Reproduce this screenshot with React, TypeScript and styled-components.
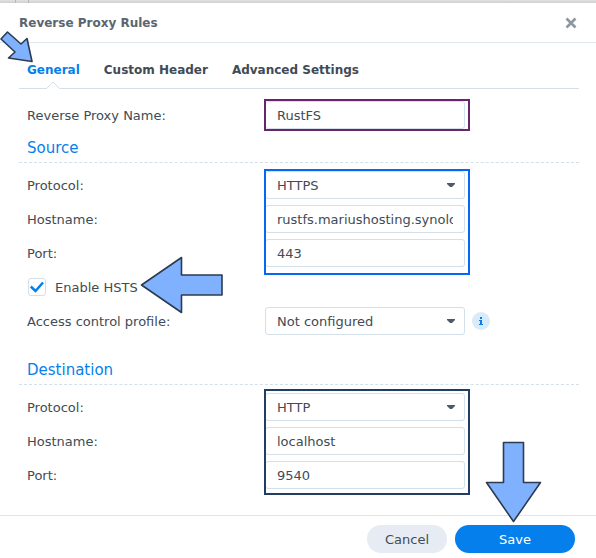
import React, { useState } from "react";
import styled, { createGlobalStyle, css } from "styled-components";

const line = "#d3dfe9";
const ink = "#414b55";
const blue = "#057feb";

const GlobalStyle = createGlobalStyle`
  *, *::before, *::after { box-sizing: border-box; }
  body {
    margin: 0;
    background: #fff;
    color: ${ink};
    font: 13px/20px "DejaVu Sans", Verdana, sans-serif;
  }
  button, input, select { font: inherit; color: inherit; }
`;

const Page = styled.div`
  display: flex;
  flex-direction: column;
  min-height: 100vh;
`;

const Backdrop = styled.div`
  display: flex;
  height: 3px;
  padding-left: 15px;
  background: linear-gradient(#e2e2e2, #cfcfcf);
`;

const BackdropColumn = styled.div`
  width: 14px;
  border: solid #b4b8bc;
  border-width: 0 1px;
`;

const Dialog = styled.section`
  display: flex;
  flex: 1;
  flex-direction: column;
`;

const Header = styled.header`
  display: flex;
  align-items: center;
  justify-content: space-between;
  height: 40px;
  padding: 0 18px 0 19px;
  border-bottom: 1px solid #dfe8ee;
`;

const Title = styled.h1`
  margin: 0;
  color: #5b656f;
  font-size: 12px;
  line-height: 20px;
`;

const CloseButton = styled.button`
  display: flex;
  padding: 0;
  border: 0;
  background: none;
  color: #8f979e;
  cursor: pointer;
`;

const Content = styled.div`
  flex: 1;
  padding: 16px 17px 26px 19px;
`;

const Tabs = styled.nav`
  display: flex;
  gap: 24px;
  height: 30px;
  padding-left: 8px;
  border-bottom: 1px solid ${line};
`;

const TabButton = styled.button<{ $active: boolean }>`
  position: relative;
  height: 30px;
  padding: 0 0 9px;
  border: 0;
  background: none;
  color: ${(p) => (p.$active ? blue : ink)};
  font-size: 12px;
  font-weight: bold;
  cursor: pointer;
`;

const Notch = styled.svg`
  position: absolute;
  bottom: 0;
  left: calc(50% - 8px);
`;

const Form = styled.form`
  padding-top: 12px;
`;

const FramedRows = styled.div<{ $color: string; $top: number; $bottom: number }>`
  position: relative;
  display: grid;
  gap: 6px;
  &::after {
    content: "";
    position: absolute;
    top: -${(p) => p.$top}px;
    bottom: -${(p) => p.$bottom}px;
    left: 245px;
    width: 206px;
    border: 2px solid ${(p) => p.$color};
    pointer-events: none;
  }
`;

const Section = styled.section<{ $gap: number }>`
  display: grid;
  gap: 6px;
  margin-top: ${(p) => p.$gap}px;
`;

const SectionTitle = styled.h2`
  height: 28px;
  margin: 0 0 2px;
  padding: 2px 8px 0;
  border-bottom: 1px dashed ${line};
  color: ${blue};
  font-size: 15px;
  font-weight: normal;
  line-height: 22px;
`;

const Row = styled.div`
  display: grid;
  grid-template-columns: 238px 200px auto;
  align-items: center;
  height: 28px;
  padding-left: 8px;
`;

const FieldLabel = styled.label`
  padding-top: 2px;
`;

const control = css`
  width: 100%;
  height: 28px;
  padding: 0 11px;
  border: 1px solid ${line};
  border-radius: 3px;
  background: #fff;
  outline: none;
`;

const TextInput = styled.input`
  ${control}
`;

const SelectBox = styled.div`
  display: grid;
  align-items: center;
  > * {
    grid-area: 1 / 1;
  }
  > svg {
    justify-self: end;
    margin-right: 10px;
    pointer-events: none;
  }
`;

const SelectInput = styled.select`
  ${control}
  appearance: none;
  padding-top: 2px;
`;

const InfoButton = styled.button`
  display: flex;
  width: 18px;
  height: 18px;
  margin-left: 7px;
  padding: 0;
  border: 0;
  border-radius: 50%;
  background: #d9eafa;
`;

const CheckRow = styled.div`
  display: flex;
  align-items: center;
  height: 28px;
  padding-left: 9px;
`;

const CheckLabel = styled.label`
  position: relative;
  display: flex;
  align-items: center;
  gap: 9px;
`;

const CheckText = styled.span`
  padding-top: 2px;
`;

const CheckSlot = styled.span`
  display: grid;
  > * {
    grid-area: 1 / 1;
  }
  > svg {
    pointer-events: none;
  }
`;

const Checkbox = styled.input`
  appearance: none;
  width: 18px;
  height: 18px;
  margin: 0;
  border: 1px solid ${line};
  border-radius: 3px;
  background: #fff;
`;

const Footer = styled.footer`
  display: flex;
  justify-content: flex-end;
  gap: 8px;
  padding: 9px 21px 5px;
  border-top: 1px solid #dfe5ec;
`;

const ActionButton = styled.button<{ $primary?: boolean }>`
  position: relative;
  width: ${(p) => (p.$primary ? 120 : 80)}px;
  height: 28px;
  padding: 2px 0 0;
  border: 0;
  border-radius: 14px;
  background: ${(p) => (p.$primary ? blue : "#e7ecf4")};
  color: ${(p) => (p.$primary ? "#fff" : ink)};
  cursor: pointer;
`;

const pointerStyle = css`
  position: absolute;
  z-index: 1;
  overflow: visible;
  pointer-events: none;
  fill: #80b1ff;
  stroke: #2c3b50;
  stroke-width: 1.6;
  stroke-linejoin: round;
`;

const TabPointer = styled.svg`
  ${pointerStyle}
  top: -28px;
  left: -27px;
`;

const CheckPointer = styled.svg`
  ${pointerStyle}
  top: -19px;
  left: 113px;
`;

const SavePointer = styled.svg`
  ${pointerStyle}
  bottom: 31px;
  left: 31px;
`;

type FieldProps = { id: string; label: string; initial: string };

function TextField({ id, label, initial }: FieldProps) {
  const [value, setValue] = useState(initial);
  return (
    <Row>
      <FieldLabel htmlFor={id}>{label}</FieldLabel>
      <TextInput id={id} value={value} spellCheck={false} onChange={(e) => setValue(e.target.value)} />
    </Row>
  );
}

function SelectField({ id, label, initial, options, children }: FieldProps & { options: string[]; children?: React.ReactNode }) {
  return (
    <Row>
      <FieldLabel htmlFor={id}>{label}</FieldLabel>
      <SelectBox>
        <SelectInput id={id} defaultValue={initial}>
          {options.map((o) => (
            <option key={o}>{o}</option>
          ))}
        </SelectInput>
        <svg width="8" height="4" viewBox="0 0 8 4" aria-hidden="true">
          <path d="M0 0h8v1L5 4H3L0 1z" fill="#505a64" />
        </svg>
      </SelectBox>
      {children}
    </Row>
  );
}

const tabs = ["General", "Custom Header", "Advanced Settings"];
const protocols = ["HTTP", "HTTPS"];

export default function App() {
  const [active, setActive] = useState("General");
  const [hsts, setHsts] = useState(true);
  return (
    <>
      <GlobalStyle />
      <Page>
        <Backdrop>
          <BackdropColumn />
        </Backdrop>
        <Dialog role="dialog" aria-labelledby="dialog-title">
          <Header>
            <Title id="dialog-title">Reverse Proxy Rules</Title>
            <CloseButton type="button" aria-label="Close">
              <svg width="14" height="14" viewBox="0 0 14 14">
                <path d="M2.5 2.5l9 9m0-9l-9 9" stroke="currentColor" strokeWidth="2.6" />
              </svg>
            </CloseButton>
          </Header>
          <Content>
            <Tabs>
              {tabs.map((tab) => (
                <TabButton key={tab} type="button" $active={tab === active} onClick={() => setActive(tab)}>
                  {tab}
                  {tab === active && (
                    <Notch width="16" height="8" viewBox="0 0 16 8" aria-hidden="true">
                      <path d="M1 8L8 1l7 7z" fill="#fff" />
                      <path d="M0.5 7.5h1L8 1l6.5 6.5h1" fill="none" stroke={line} />
                    </Notch>
                  )}
                  {tab === "General" && (
                    <TabPointer width="33" height="31" viewBox="0 31 33 31" aria-hidden="true">
                      <path d="M7.5 32L21 44l6-5.5L32 61.5 8.500 58l6.500-6L1 39z" />
                    </TabPointer>
                  )}
                </TabButton>
              ))}
            </Tabs>
            <Form id="rule" onSubmit={(e) => e.preventDefault()}>
              <FramedRows $color="#67256b" $top={2} $bottom={2}>
                <TextField id="name" label="Reverse Proxy Name:" initial="RustFS" />
              </FramedRows>
              <Section $gap={6}>
                <SectionTitle>Source</SectionTitle>
                <FramedRows $color="#0567f5" $top={2} $bottom={8}>
                  <SelectField id="src-protocol" label="Protocol:" initial="HTTPS" options={protocols} />
                  <TextField id="src-host" label="Hostname:" initial="rustfs.mariushosting.synology.me" />
                  <TextField id="src-port" label="Port:" initial="443" />
                </FramedRows>
                <CheckRow>
                  <CheckLabel>
                    <CheckSlot>
                      <Checkbox type="checkbox" checked={hsts} onChange={(e) => setHsts(e.target.checked)} />
                      {hsts && (
                        <svg width="18" height="18" viewBox="0 0 18 18" aria-hidden="true">
                          <path d="M2.8 8.5l4.700 4.500 7.500-8.500" fill="none" stroke={blue} strokeWidth="2.5" />
                        </svg>
                      )}
                    </CheckSlot>
                    <CheckText>Enable HSTS</CheckText>
                    <CheckPointer width="82" height="56" viewBox="141 257 82 56" aria-hidden="true">
                      <path d="M141.5 285l40-27.5V275H222v20h-40.5v17.500z" />
                    </CheckPointer>
                  </CheckLabel>
                </CheckRow>
                <SelectField id="profile" label="Access control profile:" initial="Not configured" options={["Not configured"]}>
                  <InfoButton type="button" aria-label="About access control profiles">
                    <svg width="18" height="18" viewBox="0 0 18 18">
                      <path d="M8 5h2v2H8zM7 8h3v4h1v1H7v-1h1V9H7z" fill={blue} />
                    </svg>
                  </InfoButton>
                </SelectField>
              </Section>
              <Section $gap={22}>
                <SectionTitle>Destination</SectionTitle>
                <FramedRows $color="#223d63" $top={4} $bottom={6}>
                  <SelectField id="dst-protocol" label="Protocol:" initial="HTTP" options={protocols} />
                  <TextField id="dst-host" label="Hostname:" initial="localhost" />
                  <TextField id="dst-port" label="Port:" initial="9540" />
                </FramedRows>
              </Section>
            </Form>
          </Content>
          <Footer>
            <ActionButton type="button">Cancel</ActionButton>
            <ActionButton type="submit" form="rule" $primary>
              Save
              <SavePointer width="56" height="80" viewBox="486 442 56 80" aria-hidden="true">
                <path d="M503.5 442.500h20v40h17l-27 39-27-39h17z" />
              </SavePointer>
            </ActionButton>
          </Footer>
        </Dialog>
      </Page>
    </>
  );
}
